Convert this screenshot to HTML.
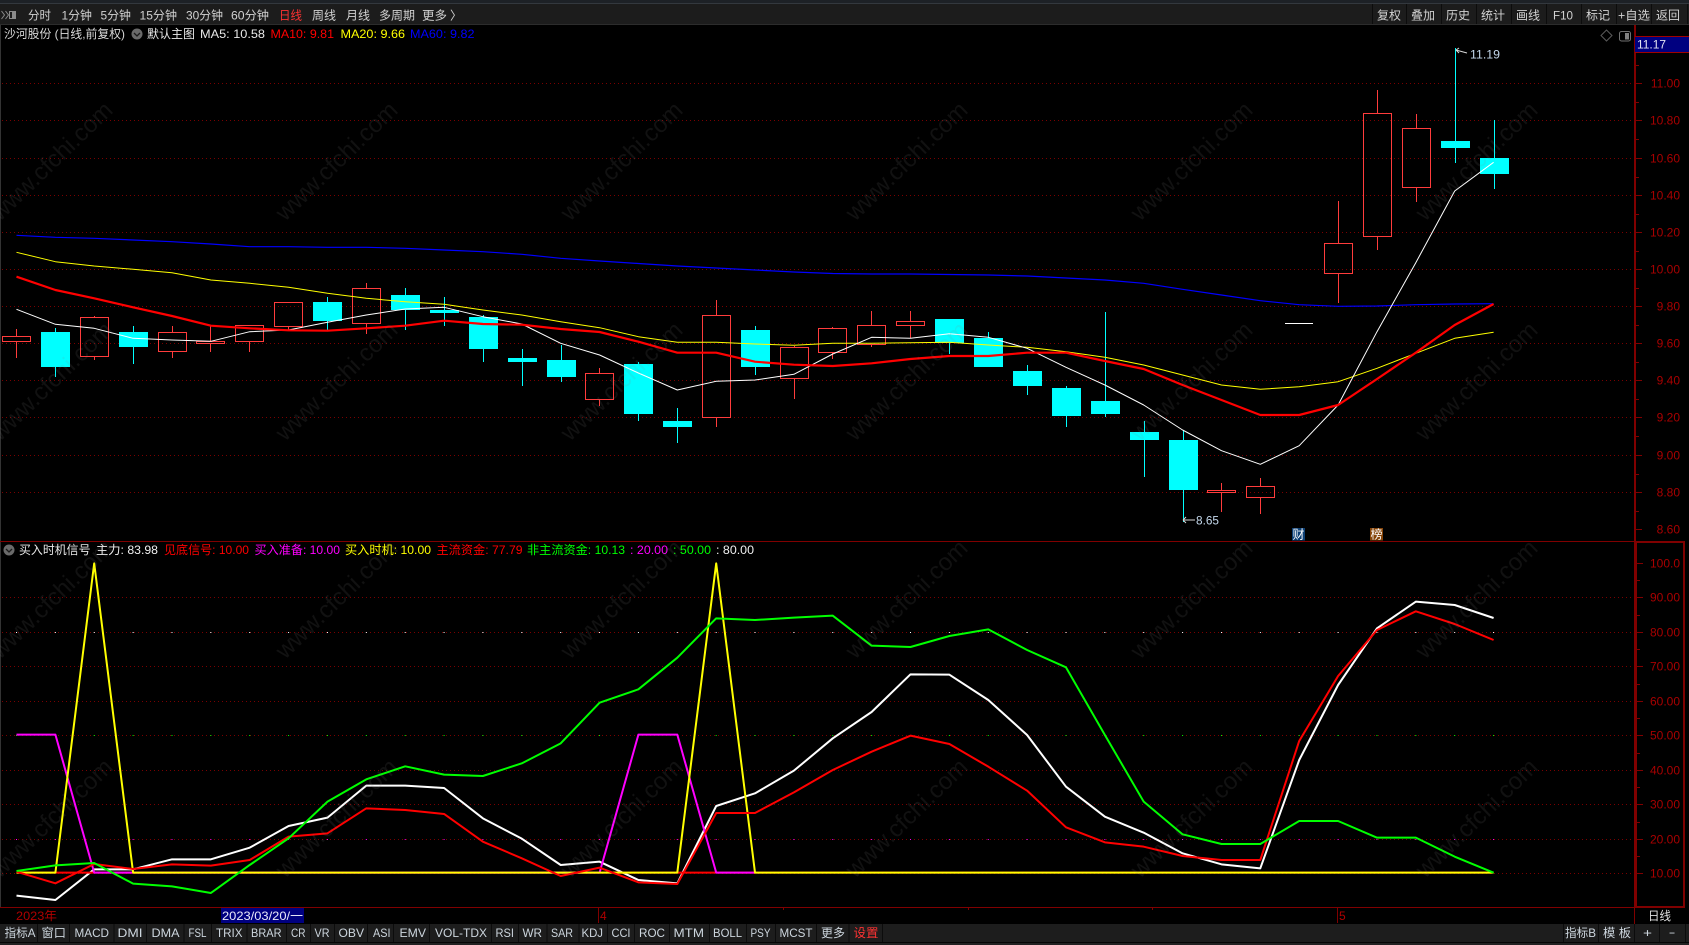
<!DOCTYPE html>
<html><head><meta charset="utf-8"><title>沙河股份</title>
<style>
html,body{margin:0;padding:0;background:#000;overflow:hidden}
svg{display:block;font-family:"Liberation Sans","Noto Sans CJK SC",sans-serif;font-size:12px}
.tb text{fill:#d2d2d2}
.tab text{fill:#cdd6de}
.ax text{fill:#a80000;text-anchor:end}
.l polyline{fill:none;vector-effect:non-scaling-stroke;stroke-width:2;stroke-linejoin:round}
.wm text{font-size:24px;fill:#808080;fill-opacity:.13}
</style></head><body>
<svg xmlns="http://www.w3.org/2000/svg" width="1689" height="945" viewBox="0 0 1689 945" lang="zh-CN">
<rect width="1689" height="945" fill="#000"/>
<!-- top toolbar -->
<rect width="1689" height="24" fill="#1c1c1c"/>
<rect width="1689" height="3" fill="#1d2126"/>
<rect y="3" width="1689" height="1" fill="#33383e"/>
<rect y="24" width="1689" height="1" fill="#2c2c2c"/>
<g fill="#0c0c0c"><rect x="1372" y="4" width="1" height="20"/><rect x="1406" y="4" width="1" height="20"/><rect x="1441" y="4" width="1" height="20"/><rect x="1476" y="4" width="1" height="20"/><rect x="1511" y="4" width="1" height="20"/><rect x="1546" y="4" width="1" height="20"/><rect x="1581" y="4" width="1" height="20"/><rect x="1616" y="4" width="1" height="20"/><rect x="1651" y="4" width="1" height="20"/><rect x="1687" y="4" width="1" height="20"/></g>
<g fill="none" stroke="#8a8a8a" stroke-width="1"><path d="M1.5 11l3 4-3 4M5.5 11l3 4-3 4"/><rect x="9.5" y="11.5" width="6" height="7"/></g>
<rect x="12" y="12" width="3" height="6" fill="#8a8a8a"/>
<g class="tb">
<text x="28" y="19.5" textLength="23" lengthAdjust="spacingAndGlyphs">分时</text>
<text x="61.5" y="19.5" textLength="30.5" lengthAdjust="spacingAndGlyphs">1分钟</text>
<text x="100.5" y="19.5" textLength="30.5" lengthAdjust="spacingAndGlyphs">5分钟</text>
<text x="139.5" y="19.5" textLength="37.5" lengthAdjust="spacingAndGlyphs">15分钟</text>
<text x="186" y="19.5" textLength="37" lengthAdjust="spacingAndGlyphs">30分钟</text>
<text x="231" y="19.5" textLength="38" lengthAdjust="spacingAndGlyphs">60分钟</text>
<text x="279" y="19.5" textLength="23" lengthAdjust="spacingAndGlyphs" style="fill:#ff3232">日线</text>
<text x="312" y="19.5" textLength="24" lengthAdjust="spacingAndGlyphs">周线</text>
<text x="346" y="19.5" textLength="24" lengthAdjust="spacingAndGlyphs">月线</text>
<text x="379" y="19.5" textLength="36" lengthAdjust="spacingAndGlyphs">多周期</text>
<text x="422" y="19.5" textLength="25" lengthAdjust="spacingAndGlyphs">更多</text>
<text x="450" y="19.5">〉</text>
<text x="1377" y="19.5" textLength="24" lengthAdjust="spacingAndGlyphs">复权</text>
<text x="1411" y="19.5" textLength="24" lengthAdjust="spacingAndGlyphs">叠加</text>
<text x="1446" y="19.5" textLength="24" lengthAdjust="spacingAndGlyphs">历史</text>
<text x="1481" y="19.5" textLength="24" lengthAdjust="spacingAndGlyphs">统计</text>
<text x="1516" y="19.5" textLength="24" lengthAdjust="spacingAndGlyphs">画线</text>
<text x="1553" y="19.5" textLength="20" lengthAdjust="spacingAndGlyphs">F10</text>
<text x="1586" y="19.5" textLength="24" lengthAdjust="spacingAndGlyphs">标记</text>
<text x="1618" y="19.5" textLength="32" lengthAdjust="spacingAndGlyphs">+自选</text>
<text x="1656" y="19.5" textLength="24" lengthAdjust="spacingAndGlyphs">返回</text>
</g>
<rect x="0" y="25" width="1" height="882" fill="#333"/>
<!-- grid -->
<g stroke="#7a0000" stroke-width="1" stroke-dasharray="1 3">
<path d="M2 83.5H1634M2 120.5H1634M2 158.5H1634M2 195.5H1634M2 232.5H1634M2 269.5H1634M2 306.5H1634M2 343.5H1634M2 380.5H1634M2 417.5H1634M2 455.5H1634M2 492.5H1634"/>
<path d="M2 597.5H1634M2 632.5H1634M2 666.5H1634M2 701.5H1634M2 735.5H1634M2 770.5H1634M2 804.5H1634M2 839.5H1634M2 873.5H1634"/>
</g>
<g stroke-dasharray="1 37.87" stroke-width="1">
<path d="M16 632.5H1494" stroke="#fff"/>
<path d="M16 735.5H1494" stroke="#00ff00"/>
<path d="M16 839.5H1494" stroke="#ff00ff"/>
</g>
<!-- axes -->
<g fill="#800000">
<rect x="1634" y="25" width="2" height="517"/>
<rect x="0" y="541" width="1634" height="1"/>
<rect x="1634" y="541" width="51" height="2"/>
<rect x="1634" y="543" width="3" height="364"/>
<rect x="1683" y="543" width="2" height="364"/>
<rect x="0" y="907" width="1634" height="1"/>
<rect x="1634" y="906" width="51" height="2"/>
<rect x="1634" y="908" width="1" height="16"/>
<rect x="598" y="908" width="1" height="15"/>
<rect x="1337" y="908" width="1" height="15"/>
<rect x="783" y="908" width="1" height="2"/><rect x="968" y="908" width="1" height="2"/><rect x="1152" y="908" width="1" height="2"/>
</g>
<g stroke="#800000" stroke-width="1">
<path d="M1636 83.5h6M1636 120.5h6M1636 158.5h6M1636 195.5h6M1636 232.5h6M1636 269.5h6M1636 306.5h6M1636 343.5h6M1636 380.5h6M1636 417.5h6M1636 455.5h6M1636 492.5h6M1636 529.5h6"/>
<path d="M1636 65.5h3M1636 102.5h3M1636 139.5h3M1636 177.5h3M1636 214.5h3M1636 251.5h3M1636 288.5h3M1636 325.5h3M1636 362.5h3M1636 399.5h3M1636 436.5h3M1636 474.5h3M1636 511.5h3"/>
<path d="M1637 563.5h6M1637 597.5h6M1637 632.5h6M1637 666.5h6M1637 701.5h6M1637 735.5h6M1637 770.5h6M1637 804.5h6M1637 839.5h6M1637 873.5h6"/>
<path d="M1637 580.5h3M1637 615.5h3M1637 649.5h3M1637 684.5h3M1637 718.5h3M1637 753.5h3M1637 787.5h3M1637 822.5h3M1637 856.5h3"/>
</g>
<g class="ax">
<text x="1680" y="87.5">11.00</text><text x="1680" y="124.5">10.80</text><text x="1680" y="162.5">10.60</text><text x="1680" y="199.5">10.40</text><text x="1680" y="236.5">10.20</text><text x="1680" y="273.5">10.00</text><text x="1680" y="310.5">9.80</text><text x="1680" y="347.5">9.60</text><text x="1680" y="384.5">9.40</text><text x="1680" y="421.5">9.20</text><text x="1680" y="459.5">9.00</text><text x="1680" y="496.5">8.80</text><text x="1680" y="533.5">8.60</text>
<text x="1680" y="567.5">100.0</text><text x="1680" y="601.5">90.00</text><text x="1680" y="636.5">80.00</text><text x="1680" y="670.5">70.00</text><text x="1680" y="705.5">60.00</text><text x="1680" y="739.5">50.00</text><text x="1680" y="774.5">40.00</text><text x="1680" y="808.5">30.00</text><text x="1680" y="843.5">20.00</text><text x="1680" y="877.5">10.00</text>
</g>
<!-- price tag -->
<rect x="1635" y="36" width="54" height="16" fill="#000080"/>
<rect x="1635" y="36" width="54" height="1" fill="#a00000"/><rect x="1635" y="52" width="54" height="1" fill="#a00000"/>
<text x="1637" y="48.5" fill="#e0e0f0" textLength="29" lengthAdjust="spacingAndGlyphs">11.17</text>
<!-- small icons -->
<path d="M1606.5 30l5.5 5.5-5.5 5.5-5.5-5.5z" fill="none" stroke="#5a5a5a"/>
<rect x="1619.5" y="31.5" width="11" height="9.5" rx="2" fill="none" stroke="#707070"/><rect x="1625" y="33" width="4" height="6.5" fill="#808080"/>
<!-- candles: red hollow -->
<g fill="none" stroke="#ff3c3c" stroke-width="1" shape-rendering="crispEdges">
<rect x="2.5" y="336.5" width="28" height="5"/><rect x="80.5" y="317.5" width="28" height="39"/><rect x="158.5" y="332.5" width="28" height="19"/><rect x="196.5" y="341.5" width="28" height="2"/><rect x="235.5" y="325.5" width="28" height="16"/><rect x="274.5" y="302.5" width="28" height="24"/><rect x="352.5" y="288.5" width="28" height="35"/><rect x="585.5" y="373.5" width="28" height="26"/><rect x="702.5" y="315.5" width="28" height="102"/><rect x="780.5" y="347.5" width="28" height="31"/><rect x="818.5" y="328.5" width="28" height="24"/><rect x="857.5" y="325.5" width="28" height="19"/><rect x="896.5" y="321.5" width="28" height="4"/><rect x="1207.5" y="490.5" width="28" height="2"/><rect x="1246.5" y="486.5" width="28" height="11"/><rect x="1324.5" y="243.5" width="28" height="30"/><rect x="1363.5" y="113.5" width="28" height="123"/><rect x="1402.5" y="128.5" width="28" height="59"/>
<path d="M16.5 329V336M16.5 342V358M94.5 316V317M94.5 357V360M172.5 326V332M172.5 352V358M210.5 326V341M210.5 344V352M249.5 342V352M288.5 327V330M366.5 283V288M366.5 324V334M599.5 368V373M599.5 400V406M716.5 300V315M716.5 418V427M794.5 346V347M794.5 379V399M832.5 327V328M832.5 353V359M871.5 311V325M871.5 345V347M910.5 311V321M910.5 326V338M1221.5 483V490M1221.5 493V512M1260.5 478V486M1260.5 498V514M1338.5 201V243M1338.5 274V303M1377.5 90V113M1377.5 237V250M1416.5 114V128M1416.5 188V202"/>
</g>
<!-- candles: cyan -->
<g stroke="#00ffff" stroke-width="1" shape-rendering="crispEdges" fill="none">
<path d="M55.5 328V377M133.5 326V364M327.5 297V330M405.5 288V330M444.5 297V326M483.5 315V362M522.5 349V386M561.5 345V382M638.5 362V421M677.5 408V443M755.5 326V375M949.5 319V354M988.5 332V367M1027.5 365V395M1066.5 386V427M1105.5 312V417M1144.5 421V477M1183.5 430V522M1455.5 48V163M1494.5 120V189"/>
</g>
<g fill="#00ffff" shape-rendering="crispEdges">
<rect x="41" y="332" width="29" height="35"/><rect x="119" y="332" width="29" height="15"/><rect x="313" y="302" width="29" height="19"/><rect x="391" y="295" width="29" height="15"/><rect x="430" y="310" width="29" height="3"/><rect x="469" y="317" width="29" height="32"/><rect x="508" y="358" width="29" height="4"/><rect x="547" y="360" width="29" height="17"/><rect x="624" y="364" width="29" height="50"/><rect x="663" y="421" width="29" height="6"/><rect x="741" y="330" width="29" height="37"/><rect x="935" y="319" width="29" height="24"/><rect x="974" y="338" width="29" height="29"/><rect x="1013" y="371" width="29" height="15"/><rect x="1052" y="388" width="29" height="28"/><rect x="1091" y="401" width="29" height="13"/><rect x="1130" y="432" width="29" height="8"/><rect x="1169" y="440" width="29" height="50"/><rect x="1441" y="141" width="29" height="7"/><rect x="1480" y="158" width="29" height="16"/>
</g>
<path d="M1285 323.5H1313" stroke="#fff" stroke-width="1"/>
<!-- MA lines -->
<g fill="none" stroke-linejoin="round">
<polyline stroke="#0000ff" stroke-width="1.2" points="16.5,235.3 55.4,237.3 94.2,238.3 133.1,240 172,241.7 210.9,244 249.7,246.7 288.6,246.7 327.5,247.3 366.3,247.3 405.2,248.3 444.1,250 482.9,251.7 521.8,254.3 560.7,258.3 599.6,261 638.4,263.5 677.3,266 716.2,268 755,270 793.9,272 832.8,273.5 871.6,274 910.5,274 949.4,274.5 988.3,275 1027.1,276 1066,278 1104.9,280 1143.7,283.3 1182.6,289.3 1221.5,295 1260.3,300.7 1299.2,304.7 1338.1,306.3 1377,306 1415.8,304.7 1454.7,304 1493.6,303.7"/>
<polyline stroke="#ffff00" stroke-width="1" points="16.5,252.3 55.4,261.7 94.2,266 133.1,269.3 172,272.7 210.9,280 249.7,283.3 288.6,287.3 327.5,293.3 366.3,298.3 405.2,301.7 444.1,304.3 482.9,310 521.8,315 560.7,321.7 599.6,327.7 638.4,336.7 677.3,342.3 716.2,342.3 755,344 793.9,345.3 832.8,343.3 871.6,343.3 910.5,342.7 949.4,342.3 988.3,345 1027.1,347.3 1066,351.7 1104.9,357.3 1143.7,365 1182.6,375 1221.5,385 1260.3,389.3 1299.2,386.7 1338.1,381.7 1377,368.3 1415.8,353.3 1454.7,338.3 1493.6,332.3"/>
<polyline stroke="#ffffff" stroke-width="1" points="16.5,309.3 55.4,324.3 94.2,328.3 133.1,338.3 172,340 210.9,341.3 249.7,331.7 288.6,330 327.5,322.3 366.3,315 405.2,309 444.1,307.3 482.9,316.7 521.8,324 560.7,343.3 599.6,355 638.4,373 677.3,390 716.2,381.3 755,380 793.9,374.3 832.8,354 871.6,337.3 910.5,338.3 949.4,333.7 988.3,337.3 1027.1,348.3 1066,367.3 1104.9,385 1143.7,405 1182.6,430 1221.5,450.7 1260.3,464.3 1299.2,445.7 1338.1,405 1377,331.7 1415.8,262.7 1454.7,191 1493.6,162.3"/>
<polyline stroke="#ff0000" stroke-width="2.2" points="16.5,276.7 55.4,290 94.2,298.3 133.1,307.3 172,316 210.9,325.7 249.7,328.3 288.6,330.3 327.5,330.7 366.3,328.3 405.2,325.7 444.1,320.7 482.9,324 521.8,324.7 560.7,329 599.6,332 638.4,341.7 677.3,352.7 716.2,352.7 755,361.7 793.9,364.7 832.8,366 871.6,363.3 910.5,359 949.4,356 988.3,356 1027.1,352.7 1066,352.7 1104.9,361 1143.7,369 1182.6,385 1221.5,400 1260.3,415 1299.2,415 1338.1,405 1377,379 1415.8,352.7 1454.7,325 1493.6,304"/>
</g>
<!-- lower lines -->
<g class="l" transform="translate(0 550) scale(1 .33333)">
<polyline stroke="#ffffff" points="16.5,1037 55.4,1050 94.2,958 133.1,958 172,928 210.9,928 249.7,893 288.6,828 327.5,803 366.3,707 405.2,707 444.1,714 482.9,805 521.8,866 560.7,945 599.6,935 638.4,990 677.3,1000 716.2,768 755,730 793.9,662 832.8,565 871.6,486 910.5,373 949.4,374 988.3,450 1027.1,555 1066,710 1104.9,800 1143.7,848 1182.6,910 1221.5,943 1260.3,955 1299.2,630 1338.1,405 1377,235 1415.8,155 1454.7,165 1493.6,204"/>
<polyline stroke="#ff0000" points="16.5,968 1493.6,968"/>
<polyline stroke="#ff00ff" points="16.5,554 55.4,554 94.2,968 133.1,968 599.6,968 638.4,554 677.3,554 716.2,968 755,968"/>
<polyline stroke="#ffff00" points="16.5,968 55.4,968 94.2,40 133.1,968 677.3,968 716.2,40 755,968 1493.6,968"/>
<polyline stroke="#ff0000" points="16.5,965 55.4,1000 94.2,942 133.1,957 172,943 210.9,947 249.7,930 288.6,860 327.5,850 366.3,775 405.2,780 444.1,792 482.9,875 521.8,925 560.7,978 599.6,953 638.4,997 677.3,1002 716.2,789 755,789 793.9,727 832.8,660 871.6,605 910.5,557 949.4,582 988.3,650 1027.1,722 1066,832 1104.9,877 1143.7,890 1182.6,918 1221.5,930 1260.3,930 1299.2,573 1338.1,378 1377,240 1415.8,184 1454.7,222 1493.6,270"/>
<polyline stroke="#00ff00" points="16.5,963 55.4,946 94.2,939 133.1,1001 172,1009 210.9,1029 249.7,945 288.6,865 327.5,755 366.3,688 405.2,649 444.1,674 482.9,678 521.8,640 560.7,580 599.6,458 638.4,418 677.3,323 716.2,205 755,210 793.9,203 832.8,197 871.6,287 910.5,291 949.4,258 988.3,238 1027.1,300 1066,352 1104.9,555 1143.7,755 1182.6,853 1221.5,882 1260.3,882 1299.2,813 1338.1,813 1377,863 1415.8,863 1454.7,920 1493.6,968"/>
</g>
<!-- high / low marks -->
<g stroke="#d8d8d8" stroke-width="1" fill="none"><path d="M1456 50l11 3M1456 50l3-2M1456 50l3 3"/><path d="M1183 520h12M1183 520l3-3M1183 520l3 3"/></g>
<text x="1470" y="58.5" fill="#c4d8ec" textLength="30" lengthAdjust="spacingAndGlyphs">11.19</text>
<text x="1196" y="524.5" fill="#c4d8ec" textLength="23" lengthAdjust="spacingAndGlyphs">8.65</text>
<rect x="1292" y="528" width="13" height="12.5" fill="#0c3f74"/><text x="1292.5" y="538.5" fill="#fff">财</text>
<rect x="1370" y="528" width="13" height="12.5" fill="#854408"/><text x="1370.5" y="538.5" fill="#fff">榜</text>
<!-- title line -->
<text x="4" y="38" fill="#d8d8d8" textLength="121" lengthAdjust="spacingAndGlyphs">沙河股份 (日线,前复权)</text>
<circle cx="137" cy="34" r="5.5" fill="#6a6a6a"/><path d="M134 33l3 3 3-3" fill="none" stroke="#1c1c1c" stroke-width="1.3"/>
<text x="147" y="38" fill="#e8e8e8" textLength="48" lengthAdjust="spacingAndGlyphs">默认主图</text>
<text x="200" y="38" fill="#e8e8e8" textLength="65" lengthAdjust="spacingAndGlyphs">MA5: 10.58</text>
<text x="270.5" y="38" fill="#ff0000" textLength="63.5" lengthAdjust="spacingAndGlyphs">MA10: 9.81</text>
<text x="340.5" y="38" fill="#ffff00" textLength="64.5" lengthAdjust="spacingAndGlyphs">MA20: 9.66</text>
<text x="410" y="38" fill="#0000ff" textLength="64.5" lengthAdjust="spacingAndGlyphs">MA60: 9.82</text>
<!-- lower title -->
<circle cx="9" cy="550" r="5.5" fill="#6a6a6a"/><path d="M6 549l3 3 3-3" fill="none" stroke="#1c1c1c" stroke-width="1.3"/>
<text x="19" y="554" fill="#e8e8e8" textLength="71.5" lengthAdjust="spacingAndGlyphs">买入时机信号</text>
<text x="96" y="554" fill="#f0f0f0" textLength="62" lengthAdjust="spacingAndGlyphs">主力: 83.98</text>
<text x="164" y="554" fill="#ff0000" textLength="85" lengthAdjust="spacingAndGlyphs">见底信号: 10.00</text>
<text x="254.5" y="554" fill="#ff00ff" textLength="85.5" lengthAdjust="spacingAndGlyphs">买入准备: 10.00</text>
<text x="345" y="554" fill="#ffff00" textLength="86" lengthAdjust="spacingAndGlyphs">买入时机: 10.00</text>
<text x="436.5" y="554" fill="#ff0000" textLength="86" lengthAdjust="spacingAndGlyphs">主流资金: 77.79</text>
<text x="527" y="554" fill="#00ff00" textLength="98" lengthAdjust="spacingAndGlyphs">非主流资金: 10.13</text>
<text x="630" y="554" fill="#ff00ff" textLength="38" lengthAdjust="spacingAndGlyphs">: 20.00</text>
<text x="673" y="554" fill="#00ff00" textLength="38" lengthAdjust="spacingAndGlyphs">: 50.00</text>
<text x="716" y="554" fill="#f0f0f0" textLength="38" lengthAdjust="spacingAndGlyphs">: 80.00</text>
<!-- date row -->
<text x="16" y="920" fill="#b00000" textLength="41" lengthAdjust="spacingAndGlyphs">2023年</text>
<rect x="221" y="908" width="83" height="15" fill="#000080"/>
<text x="222" y="920" fill="#e8e8f8" textLength="81" lengthAdjust="spacingAndGlyphs">2023/03/20/一</text>
<text x="600" y="920" fill="#b00000">4</text>
<text x="1339" y="920" fill="#b00000">5</text>
<text x="1648" y="920" fill="#e0e0e0" textLength="23" lengthAdjust="spacingAndGlyphs">日线</text>
<!-- bottom toolbar -->
<rect y="924" width="1689" height="18" fill="#1d1d1d"/>
<rect y="942" width="1689" height="1" fill="#060606"/>
<rect y="943" width="1689" height="2" fill="#222"/>
<g fill="#0c0c0c"><rect x="37" y="924" width="1" height="18"/><rect x="69" y="924" width="1" height="18"/><rect x="113.5" y="924" width="1" height="18"/><rect x="146" y="924" width="1" height="18"/><rect x="183.5" y="924" width="1" height="18"/><rect x="211" y="924" width="1" height="18"/><rect x="246.5" y="924" width="1" height="18"/><rect x="286" y="924" width="1" height="18"/><rect x="310" y="924" width="1" height="18"/><rect x="334" y="924" width="1" height="18"/><rect x="367" y="924" width="1" height="18"/><rect x="393" y="924" width="1" height="18"/><rect x="429" y="924" width="1" height="18"/><rect x="491" y="924" width="1" height="18"/><rect x="518" y="924" width="1" height="18"/><rect x="546.5" y="924" width="1" height="18"/><rect x="578.5" y="924" width="1" height="18"/><rect x="607" y="924" width="1" height="18"/><rect x="634" y="924" width="1" height="18"/><rect x="669" y="924" width="1" height="18"/><rect x="709" y="924" width="1" height="18"/><rect x="746" y="924" width="1" height="18"/><rect x="775" y="924" width="1" height="18"/><rect x="816" y="924" width="1" height="18"/><rect x="848.5" y="924" width="1" height="18"/><rect x="882" y="924" width="1" height="18"/><rect x="1563" y="924" width="1" height="18"/><rect x="1598" y="924" width="1" height="18"/><rect x="1634" y="924" width="1" height="18"/><rect x="1659" y="924" width="1" height="18"/><rect x="1685" y="924" width="1" height="18"/></g>
<g class="tab">
<text x="4.5" y="937" textLength="31" lengthAdjust="spacingAndGlyphs">指标A</text>
<text x="41.5" y="937" textLength="24.5" lengthAdjust="spacingAndGlyphs">窗口</text>
<text x="74.5" y="937" textLength="34.5" lengthAdjust="spacingAndGlyphs">MACD</text>
<text x="117.5" y="937" textLength="25" lengthAdjust="spacingAndGlyphs">DMI</text>
<text x="151.5" y="937" textLength="28" lengthAdjust="spacingAndGlyphs">DMA</text>
<text x="188.5" y="937" textLength="18" lengthAdjust="spacingAndGlyphs">FSL</text>
<text x="216" y="937" textLength="26.5" lengthAdjust="spacingAndGlyphs">TRIX</text>
<text x="251" y="937" textLength="30.5" lengthAdjust="spacingAndGlyphs">BRAR</text>
<text x="291" y="937" textLength="14.5" lengthAdjust="spacingAndGlyphs">CR</text>
<text x="314.5" y="937" textLength="15" lengthAdjust="spacingAndGlyphs">VR</text>
<text x="338.5" y="937" textLength="25.5" lengthAdjust="spacingAndGlyphs">OBV</text>
<text x="373" y="937" textLength="17.5" lengthAdjust="spacingAndGlyphs">ASI</text>
<text x="399.5" y="937" textLength="26.5" lengthAdjust="spacingAndGlyphs">EMV</text>
<text x="435" y="937" textLength="52" lengthAdjust="spacingAndGlyphs">VOL-TDX</text>
<text x="495.5" y="937" textLength="18.5" lengthAdjust="spacingAndGlyphs">RSI</text>
<text x="522.5" y="937" textLength="19.5" lengthAdjust="spacingAndGlyphs">WR</text>
<text x="551" y="937" textLength="22" lengthAdjust="spacingAndGlyphs">SAR</text>
<text x="581.5" y="937" textLength="21.5" lengthAdjust="spacingAndGlyphs">KDJ</text>
<text x="611.5" y="937" textLength="19" lengthAdjust="spacingAndGlyphs">CCI</text>
<text x="639" y="937" textLength="26" lengthAdjust="spacingAndGlyphs">ROC</text>
<text x="673.5" y="937" textLength="30.5" lengthAdjust="spacingAndGlyphs">MTM</text>
<text x="713" y="937" textLength="29" lengthAdjust="spacingAndGlyphs">BOLL</text>
<text x="750.5" y="937" textLength="20" lengthAdjust="spacingAndGlyphs">PSY</text>
<text x="779.5" y="937" textLength="33" lengthAdjust="spacingAndGlyphs">MCST</text>
<text x="821" y="937" textLength="24" lengthAdjust="spacingAndGlyphs">更多</text>
<text x="853.5" y="937" textLength="25" lengthAdjust="spacingAndGlyphs" style="fill:#ff3232">设置</text>
<text x="1565" y="937" textLength="31" lengthAdjust="spacingAndGlyphs">指标B</text>
<text x="1603" y="937" textLength="28" lengthAdjust="spacingAndGlyphs">模 板</text>
<text x="1643" y="937" textLength="9" lengthAdjust="spacingAndGlyphs">+</text>
<text x="1669" y="937" textLength="6" lengthAdjust="spacingAndGlyphs">−</text>
</g>
<!-- watermark -->
<g class="wm">
<text transform="translate(0 222) rotate(-44)">www.cfchi.com</text><text transform="translate(285 222) rotate(-44)">www.cfchi.com</text><text transform="translate(570 222) rotate(-44)">www.cfchi.com</text><text transform="translate(855 222) rotate(-44)">www.cfchi.com</text><text transform="translate(1140 222) rotate(-44)">www.cfchi.com</text><text transform="translate(1425 222) rotate(-44)">www.cfchi.com</text>
<text transform="translate(0 442) rotate(-44)">www.cfchi.com</text><text transform="translate(285 442) rotate(-44)">www.cfchi.com</text><text transform="translate(570 442) rotate(-44)">www.cfchi.com</text><text transform="translate(855 442) rotate(-44)">www.cfchi.com</text><text transform="translate(1140 442) rotate(-44)">www.cfchi.com</text><text transform="translate(1425 442) rotate(-44)">www.cfchi.com</text>
<text transform="translate(0 660) rotate(-44)">www.cfchi.com</text><text transform="translate(285 660) rotate(-44)">www.cfchi.com</text><text transform="translate(570 660) rotate(-44)">www.cfchi.com</text><text transform="translate(855 660) rotate(-44)">www.cfchi.com</text><text transform="translate(1140 660) rotate(-44)">www.cfchi.com</text><text transform="translate(1425 660) rotate(-44)">www.cfchi.com</text>
<text transform="translate(0 879) rotate(-44)">www.cfchi.com</text><text transform="translate(285 879) rotate(-44)">www.cfchi.com</text><text transform="translate(570 879) rotate(-44)">www.cfchi.com</text><text transform="translate(855 879) rotate(-44)">www.cfchi.com</text><text transform="translate(1140 879) rotate(-44)">www.cfchi.com</text><text transform="translate(1425 879) rotate(-44)">www.cfchi.com</text>
</g>
</svg>
</body></html>
